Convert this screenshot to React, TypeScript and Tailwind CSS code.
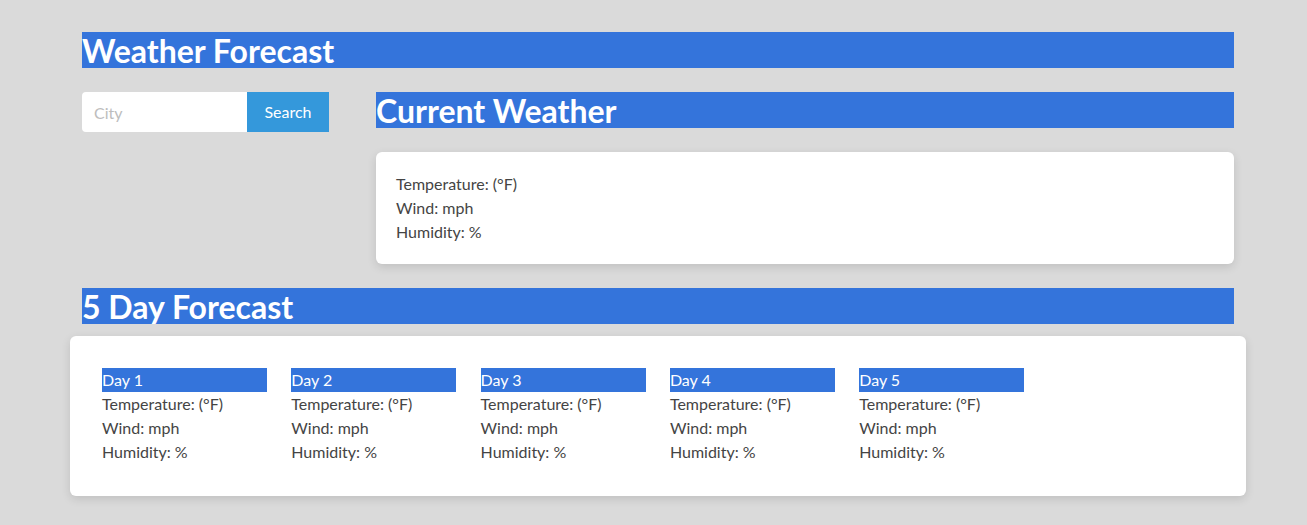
import React from 'react';

const days = ['Day 1', 'Day 2', 'Day 3', 'Day 4', 'Day 5'];

const Heading: React.FC<{ children: React.ReactNode }> = ({ children }) => (
  <h2 className="bg-[#3474db] text-white text-[32px] leading-[38px] font-bold h-9 whitespace-nowrap">
    {children}
  </h2>
);

const Stats: React.FC = () => (
  <>
    <p>Temperature: (°F)</p>
    <p>Wind: mph</p>
    <p>Humidity: %</p>
  </>
);

const App: React.FC = () => {
  return (
    <div className="min-h-[525px] bg-[#dadada] font-['Lato','Liberation_Sans',sans-serif] text-[#444] text-base leading-6">
      <div className="w-[1152px] ml-[82px] pt-8 pb-7">
        <Heading>Weather Forecast</Heading>

        <div className="flex mt-6">
          <div className="w-[294px] shrink-0">
            <form className="flex h-10" onSubmit={(e) => e.preventDefault()}>
              <input
                type="text"
                placeholder="City"
                className="w-[165px] h-10 bg-white rounded-l px-3 outline-none placeholder:text-[#bdbdbd]"
              />
              <button type="submit" className="w-[82px] h-10 bg-[#3498db] text-white">
                Search
              </button>
            </form>
          </div>
          <div className="flex-1">
            <Heading>Current Weather</Heading>
            <div className="mt-6 bg-white rounded-md p-5 shadow-[0_3px_10px_rgba(0,0,0,0.12)]">
              <Stats />
            </div>
          </div>
        </div>

        <div className="mt-6">
          <Heading>5 Day Forecast</Heading>
        </div>

        <div className="mt-3 -mx-3 bg-white rounded-md p-8 shadow-[0_3px_10px_rgba(0,0,0,0.12)]">
          <div className="flex gap-x-[24.3px]">
            {days.map((d) => (
              <div key={d} className="w-[165px]">
                <div className="bg-[#3474db] text-white h-6">{d}</div>
                <Stats />
              </div>
            ))}
          </div>
        </div>
      </div>
    </div>
  );
};

export default App;
